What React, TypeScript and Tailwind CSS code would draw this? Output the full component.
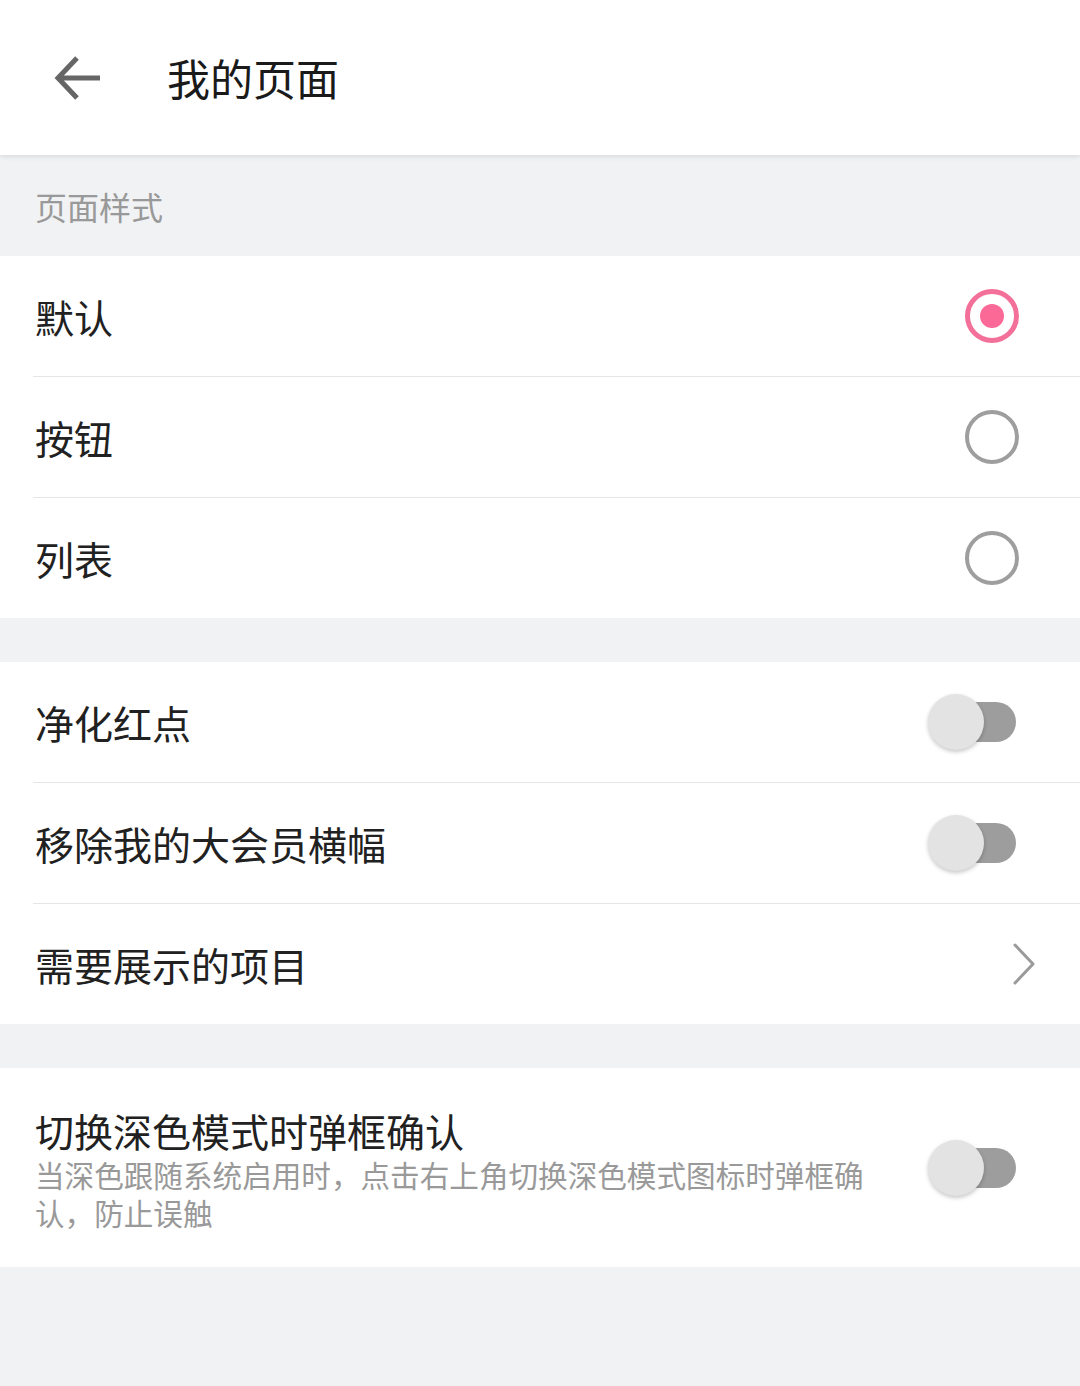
import React from 'react'

const font = { fontFamily: '"Noto Sans CJK SC", "Noto Sans", sans-serif' }

const Radio = ({ checked }: { checked?: boolean }) => {
  if (checked) {
    return (
      <div className="w-[54px] h-[54px] rounded-full border-[5px] border-[#f27099] flex items-center justify-center">
        <div className="w-[24px] h-[24px] rounded-full bg-[#fb6a96]" />
      </div>
    )
  }
  return <div className="w-[54px] h-[54px] rounded-full border-[4px] border-[#9e9e9e]" />
}

const Toggle = () => (
  <div className="relative w-[90px] h-[58px] flex items-center">
    <div className="absolute left-[8px] right-[2px] h-[40px] rounded-full bg-[#9d9d9d]" />
    <div className="absolute left-0 w-[56px] h-[56px] rounded-full bg-[#e3e3e3] shadow-[0_2px_4px_rgba(0,0,0,0.22)]" />
  </div>
)

const Chevron = () => (
  <svg width="24" height="44" viewBox="0 0 24 44" fill="none">
    <path d="M3 3 L21 22 L3 41" stroke="#9a9a9a" strokeWidth="3" strokeLinecap="round" strokeLinejoin="round" />
  </svg>
)

const Divider = () => (
  <div className="pl-[33px] bg-white">
    <div className="h-px bg-[#e6e6e6]" />
  </div>
)

const Row = ({ label, right }: { label: string; right: React.ReactNode }) => (
  <div className="h-[120px] bg-white flex items-center justify-between pl-[35px]">
    <span className="text-[39px] text-[#212121] leading-none">{label}</span>
    {right}
  </div>
)

export default function App() {
  return (
    <div className="w-[1080px] min-h-[1386px] bg-[#f1f2f4]" style={font}>
      <div className="relative z-10 h-[155px] bg-white flex items-center shadow-[0_2px_5px_rgba(0,0,0,0.09)]">
        <div className="w-[167px] pl-[54px] flex items-center">
          <svg width="48" height="46" viewBox="0 0 48 46" fill="none">
            <path d="M4 23 H46 M23 3 L4 23 L23 43" stroke="#666666" strokeWidth="5" strokeLinejoin="miter" strokeLinecap="butt" />
          </svg>
        </div>
        <span className="text-[43px] text-[#1a1a1a] leading-none">我的页面</span>
      </div>

      <div className="h-[101px] flex items-center pl-[35px]">
        <span className="text-[32px] text-[#999999] leading-none">页面样式</span>
      </div>

      <div>
        <Row label="默认" right={<div className="pr-[61px]"><Radio checked /></div>} />
        <Divider />
        <Row label="按钮" right={<div className="pr-[61px]"><Radio /></div>} />
        <Divider />
        <Row label="列表" right={<div className="pr-[61px]"><Radio /></div>} />
      </div>

      <div className="h-[44px]" />

      <div>
        <Row label="净化红点" right={<div className="pr-[62px]"><Toggle /></div>} />
        <Divider />
        <Row label="移除我的大会员横幅" right={<div className="pr-[62px]"><Toggle /></div>} />
        <Divider />
        <Row label="需要展示的项目" right={<div className="pr-[44px]"><Chevron /></div>} />
      </div>

      <div className="h-[44px]" />

      <div className="h-[199px] bg-white flex items-center justify-between pl-[35px]">
        <div className="w-[850px]">
          <div className="text-[39px] text-[#212121] leading-[52px]">切换深色模式时弹框确认</div>
          <div className="text-[29.6px] text-[#999999] leading-[38px]">当深色跟随系统启用时，点击右上角切换深色模式图标时弹框确认，防止误触</div>
        </div>
        <div className="pr-[62px]"><Toggle /></div>
      </div>
    </div>
  )
}
